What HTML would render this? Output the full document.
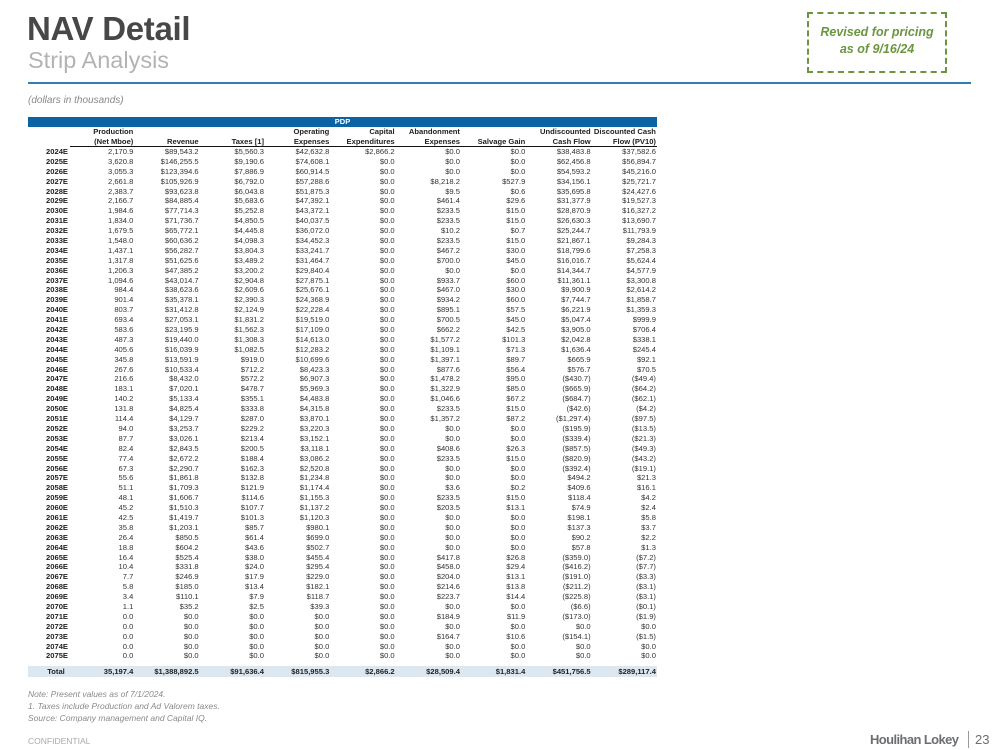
<!DOCTYPE html>
<html><head><meta charset="utf-8"><style>
body{margin:0;width:999px;height:750px;background:#fff;position:relative;overflow:hidden;font-family:"Liberation Sans",Arial,sans-serif;}
.a{position:absolute;white-space:nowrap}
.t1{left:27px;top:10px;font-size:33px;font-weight:bold;color:#474747;letter-spacing:-0.3px}
.t2{left:28px;top:47px;font-size:23.5px;color:#b3b3b3}
.hl{left:28px;top:82px;width:943px;height:1.5px;background:#2f7fb5}
.box{left:807px;top:12px;width:136px;height:57px;border:2.5px dashed #6b9640;color:#6b9640;font-weight:bold;font-style:italic;font-size:12.5px;text-align:center;line-height:17px;padding-top:10px;box-sizing:content-box;height:47px}
.dl{left:28px;top:95px;font-size:10px;font-style:italic;color:#888}
.bar{left:28px;top:117px;width:629px;height:10px;background:#0b63a4;color:#fff;font-size:7.5px;font-weight:bold;text-align:center;line-height:10px}
.tb{position:absolute;left:28px;top:127px;width:629px;font-size:7.6px;color:#333}
.r{display:flex;height:9.9px;line-height:9.9px}
.r span{width:65.33px;text-align:right;flex:none}
.r span:first-child{width:40px;font-weight:bold;color:#222}
.h{font-weight:bold;color:#222;height:9.5px;line-height:9.5px}
.h2{border-bottom:1.3px solid #111;margin-left:42px;height:9.5px}
.h2 span:first-child{width:0 !important}
.tot{margin-top:5px;background:#dde7f0;height:11px;line-height:11px;font-weight:bold;color:#222}
.tot span:first-child{text-align:center;width:56px}
.tot span:nth-child(2){width:49.33px}
.note{left:28px;font-size:8.5px;font-style:italic;color:#8a8a8a}
.conf{left:28px;top:736px;font-size:8.5px;color:#aaa}
.hlk{left:870px;top:732px;font-size:13px;font-weight:bold;color:#6b6e72;letter-spacing:-0.6px}
.sep{left:968px;top:731px;width:1px;height:17px;background:#9a9a9a}
.pg{left:975px;top:732px;font-size:13px;color:#6b6e72}
</style></head><body>
<div class="a t1">NAV Detail</div>
<div class="a t2">Strip Analysis</div>
<div class="a hl"></div>
<div class="a box">Revised for pricing<br>as of 9/16/24</div>
<div class="a dl">(dollars in thousands)</div>
<div class="a bar">PDP</div>
<div class="tb">
<div class="r h"><span></span><span>Production</span><span></span><span></span><span>Operating</span><span>Capital</span><span>Abandonment</span><span></span><span>Undiscounted</span><span>Discounted Cash</span></div>
<div class="r h h2"><span></span><span style="width:63.33px">(Net Mboe)</span><span>Revenue</span><span>Taxes [1]</span><span>Expenses</span><span>Expenditures</span><span>Expenses</span><span>Salvage Gain</span><span>Cash Flow</span><span>Flow (PV10)</span></div>
<div class="r"><span>2024E</span><span>2,170.9</span><span>$89,543.2</span><span>$5,560.3</span><span>$42,632.8</span><span>$2,866.2</span><span>$0.0</span><span>$0.0</span><span>$38,483.8</span><span>$37,582.6</span></div>
<div class="r"><span>2025E</span><span>3,620.8</span><span>$146,255.5</span><span>$9,190.6</span><span>$74,608.1</span><span>$0.0</span><span>$0.0</span><span>$0.0</span><span>$62,456.8</span><span>$56,894.7</span></div>
<div class="r"><span>2026E</span><span>3,055.3</span><span>$123,394.6</span><span>$7,886.9</span><span>$60,914.5</span><span>$0.0</span><span>$0.0</span><span>$0.0</span><span>$54,593.2</span><span>$45,216.0</span></div>
<div class="r"><span>2027E</span><span>2,661.8</span><span>$105,926.9</span><span>$6,792.0</span><span>$57,288.6</span><span>$0.0</span><span>$8,218.2</span><span>$527.9</span><span>$34,156.1</span><span>$25,721.7</span></div>
<div class="r"><span>2028E</span><span>2,383.7</span><span>$93,623.8</span><span>$6,043.8</span><span>$51,875.3</span><span>$0.0</span><span>$9.5</span><span>$0.6</span><span>$35,695.8</span><span>$24,427.6</span></div>
<div class="r"><span>2029E</span><span>2,166.7</span><span>$84,885.4</span><span>$5,683.6</span><span>$47,392.1</span><span>$0.0</span><span>$461.4</span><span>$29.6</span><span>$31,377.9</span><span>$19,527.3</span></div>
<div class="r"><span>2030E</span><span>1,984.6</span><span>$77,714.3</span><span>$5,252.8</span><span>$43,372.1</span><span>$0.0</span><span>$233.5</span><span>$15.0</span><span>$28,870.9</span><span>$16,327.2</span></div>
<div class="r"><span>2031E</span><span>1,834.0</span><span>$71,736.7</span><span>$4,850.5</span><span>$40,037.5</span><span>$0.0</span><span>$233.5</span><span>$15.0</span><span>$26,630.3</span><span>$13,690.7</span></div>
<div class="r"><span>2032E</span><span>1,679.5</span><span>$65,772.1</span><span>$4,445.8</span><span>$36,072.0</span><span>$0.0</span><span>$10.2</span><span>$0.7</span><span>$25,244.7</span><span>$11,793.9</span></div>
<div class="r"><span>2033E</span><span>1,548.0</span><span>$60,636.2</span><span>$4,098.3</span><span>$34,452.3</span><span>$0.0</span><span>$233.5</span><span>$15.0</span><span>$21,867.1</span><span>$9,284.3</span></div>
<div class="r"><span>2034E</span><span>1,437.1</span><span>$56,282.7</span><span>$3,804.3</span><span>$33,241.7</span><span>$0.0</span><span>$467.2</span><span>$30.0</span><span>$18,799.6</span><span>$7,258.3</span></div>
<div class="r"><span>2035E</span><span>1,317.8</span><span>$51,625.6</span><span>$3,489.2</span><span>$31,464.7</span><span>$0.0</span><span>$700.0</span><span>$45.0</span><span>$16,016.7</span><span>$5,624.4</span></div>
<div class="r"><span>2036E</span><span>1,206.3</span><span>$47,385.2</span><span>$3,200.2</span><span>$29,840.4</span><span>$0.0</span><span>$0.0</span><span>$0.0</span><span>$14,344.7</span><span>$4,577.9</span></div>
<div class="r"><span>2037E</span><span>1,094.6</span><span>$43,014.7</span><span>$2,904.8</span><span>$27,875.1</span><span>$0.0</span><span>$933.7</span><span>$60.0</span><span>$11,361.1</span><span>$3,300.8</span></div>
<div class="r"><span>2038E</span><span>984.4</span><span>$38,623.6</span><span>$2,609.6</span><span>$25,676.1</span><span>$0.0</span><span>$467.0</span><span>$30.0</span><span>$9,900.9</span><span>$2,614.2</span></div>
<div class="r"><span>2039E</span><span>901.4</span><span>$35,378.1</span><span>$2,390.3</span><span>$24,368.9</span><span>$0.0</span><span>$934.2</span><span>$60.0</span><span>$7,744.7</span><span>$1,858.7</span></div>
<div class="r"><span>2040E</span><span>803.7</span><span>$31,412.8</span><span>$2,124.9</span><span>$22,228.4</span><span>$0.0</span><span>$895.1</span><span>$57.5</span><span>$6,221.9</span><span>$1,359.3</span></div>
<div class="r"><span>2041E</span><span>693.4</span><span>$27,053.1</span><span>$1,831.2</span><span>$19,519.0</span><span>$0.0</span><span>$700.5</span><span>$45.0</span><span>$5,047.4</span><span>$999.9</span></div>
<div class="r"><span>2042E</span><span>583.6</span><span>$23,195.9</span><span>$1,562.3</span><span>$17,109.0</span><span>$0.0</span><span>$662.2</span><span>$42.5</span><span>$3,905.0</span><span>$706.4</span></div>
<div class="r"><span>2043E</span><span>487.3</span><span>$19,440.0</span><span>$1,308.3</span><span>$14,613.0</span><span>$0.0</span><span>$1,577.2</span><span>$101.3</span><span>$2,042.8</span><span>$338.1</span></div>
<div class="r"><span>2044E</span><span>405.6</span><span>$16,039.9</span><span>$1,082.5</span><span>$12,283.2</span><span>$0.0</span><span>$1,109.1</span><span>$71.3</span><span>$1,636.4</span><span>$245.4</span></div>
<div class="r"><span>2045E</span><span>345.8</span><span>$13,591.9</span><span>$919.0</span><span>$10,699.6</span><span>$0.0</span><span>$1,397.1</span><span>$89.7</span><span>$665.9</span><span>$92.1</span></div>
<div class="r"><span>2046E</span><span>267.6</span><span>$10,533.4</span><span>$712.2</span><span>$8,423.3</span><span>$0.0</span><span>$877.6</span><span>$56.4</span><span>$576.7</span><span>$70.5</span></div>
<div class="r"><span>2047E</span><span>216.6</span><span>$8,432.0</span><span>$572.2</span><span>$6,907.3</span><span>$0.0</span><span>$1,478.2</span><span>$95.0</span><span>($430.7)</span><span>($49.4)</span></div>
<div class="r"><span>2048E</span><span>183.1</span><span>$7,020.1</span><span>$478.7</span><span>$5,969.3</span><span>$0.0</span><span>$1,322.9</span><span>$85.0</span><span>($665.9)</span><span>($64.2)</span></div>
<div class="r"><span>2049E</span><span>140.2</span><span>$5,133.4</span><span>$355.1</span><span>$4,483.8</span><span>$0.0</span><span>$1,046.6</span><span>$67.2</span><span>($684.7)</span><span>($62.1)</span></div>
<div class="r"><span>2050E</span><span>131.8</span><span>$4,825.4</span><span>$333.8</span><span>$4,315.8</span><span>$0.0</span><span>$233.5</span><span>$15.0</span><span>($42.6)</span><span>($4.2)</span></div>
<div class="r"><span>2051E</span><span>114.4</span><span>$4,129.7</span><span>$287.0</span><span>$3,870.1</span><span>$0.0</span><span>$1,357.2</span><span>$87.2</span><span>($1,297.4)</span><span>($97.5)</span></div>
<div class="r"><span>2052E</span><span>94.0</span><span>$3,253.7</span><span>$229.2</span><span>$3,220.3</span><span>$0.0</span><span>$0.0</span><span>$0.0</span><span>($195.9)</span><span>($13.5)</span></div>
<div class="r"><span>2053E</span><span>87.7</span><span>$3,026.1</span><span>$213.4</span><span>$3,152.1</span><span>$0.0</span><span>$0.0</span><span>$0.0</span><span>($339.4)</span><span>($21.3)</span></div>
<div class="r"><span>2054E</span><span>82.4</span><span>$2,843.5</span><span>$200.5</span><span>$3,118.1</span><span>$0.0</span><span>$408.6</span><span>$26.3</span><span>($857.5)</span><span>($49.3)</span></div>
<div class="r"><span>2055E</span><span>77.4</span><span>$2,672.2</span><span>$188.4</span><span>$3,086.2</span><span>$0.0</span><span>$233.5</span><span>$15.0</span><span>($820.9)</span><span>($43.2)</span></div>
<div class="r"><span>2056E</span><span>67.3</span><span>$2,290.7</span><span>$162.3</span><span>$2,520.8</span><span>$0.0</span><span>$0.0</span><span>$0.0</span><span>($392.4)</span><span>($19.1)</span></div>
<div class="r"><span>2057E</span><span>55.6</span><span>$1,861.8</span><span>$132.8</span><span>$1,234.8</span><span>$0.0</span><span>$0.0</span><span>$0.0</span><span>$494.2</span><span>$21.3</span></div>
<div class="r"><span>2058E</span><span>51.1</span><span>$1,709.3</span><span>$121.9</span><span>$1,174.4</span><span>$0.0</span><span>$3.6</span><span>$0.2</span><span>$409.6</span><span>$16.1</span></div>
<div class="r"><span>2059E</span><span>48.1</span><span>$1,606.7</span><span>$114.6</span><span>$1,155.3</span><span>$0.0</span><span>$233.5</span><span>$15.0</span><span>$118.4</span><span>$4.2</span></div>
<div class="r"><span>2060E</span><span>45.2</span><span>$1,510.3</span><span>$107.7</span><span>$1,137.2</span><span>$0.0</span><span>$203.5</span><span>$13.1</span><span>$74.9</span><span>$2.4</span></div>
<div class="r"><span>2061E</span><span>42.5</span><span>$1,419.7</span><span>$101.3</span><span>$1,120.3</span><span>$0.0</span><span>$0.0</span><span>$0.0</span><span>$198.1</span><span>$5.8</span></div>
<div class="r"><span>2062E</span><span>35.8</span><span>$1,203.1</span><span>$85.7</span><span>$980.1</span><span>$0.0</span><span>$0.0</span><span>$0.0</span><span>$137.3</span><span>$3.7</span></div>
<div class="r"><span>2063E</span><span>26.4</span><span>$850.5</span><span>$61.4</span><span>$699.0</span><span>$0.0</span><span>$0.0</span><span>$0.0</span><span>$90.2</span><span>$2.2</span></div>
<div class="r"><span>2064E</span><span>18.8</span><span>$604.2</span><span>$43.6</span><span>$502.7</span><span>$0.0</span><span>$0.0</span><span>$0.0</span><span>$57.8</span><span>$1.3</span></div>
<div class="r"><span>2065E</span><span>16.4</span><span>$525.4</span><span>$38.0</span><span>$455.4</span><span>$0.0</span><span>$417.8</span><span>$26.8</span><span>($359.0)</span><span>($7.2)</span></div>
<div class="r"><span>2066E</span><span>10.4</span><span>$331.8</span><span>$24.0</span><span>$295.4</span><span>$0.0</span><span>$458.0</span><span>$29.4</span><span>($416.2)</span><span>($7.7)</span></div>
<div class="r"><span>2067E</span><span>7.7</span><span>$246.9</span><span>$17.9</span><span>$229.0</span><span>$0.0</span><span>$204.0</span><span>$13.1</span><span>($191.0)</span><span>($3.3)</span></div>
<div class="r"><span>2068E</span><span>5.8</span><span>$185.0</span><span>$13.4</span><span>$182.1</span><span>$0.0</span><span>$214.6</span><span>$13.8</span><span>($211.2)</span><span>($3.1)</span></div>
<div class="r"><span>2069E</span><span>3.4</span><span>$110.1</span><span>$7.9</span><span>$118.7</span><span>$0.0</span><span>$223.7</span><span>$14.4</span><span>($225.8)</span><span>($3.1)</span></div>
<div class="r"><span>2070E</span><span>1.1</span><span>$35.2</span><span>$2.5</span><span>$39.3</span><span>$0.0</span><span>$0.0</span><span>$0.0</span><span>($6.6)</span><span>($0.1)</span></div>
<div class="r"><span>2071E</span><span>0.0</span><span>$0.0</span><span>$0.0</span><span>$0.0</span><span>$0.0</span><span>$184.9</span><span>$11.9</span><span>($173.0)</span><span>($1.9)</span></div>
<div class="r"><span>2072E</span><span>0.0</span><span>$0.0</span><span>$0.0</span><span>$0.0</span><span>$0.0</span><span>$0.0</span><span>$0.0</span><span>$0.0</span><span>$0.0</span></div>
<div class="r"><span>2073E</span><span>0.0</span><span>$0.0</span><span>$0.0</span><span>$0.0</span><span>$0.0</span><span>$164.7</span><span>$10.6</span><span>($154.1)</span><span>($1.5)</span></div>
<div class="r"><span>2074E</span><span>0.0</span><span>$0.0</span><span>$0.0</span><span>$0.0</span><span>$0.0</span><span>$0.0</span><span>$0.0</span><span>$0.0</span><span>$0.0</span></div>
<div class="r"><span>2075E</span><span>0.0</span><span>$0.0</span><span>$0.0</span><span>$0.0</span><span>$0.0</span><span>$0.0</span><span>$0.0</span><span>$0.0</span><span>$0.0</span></div>
<div class="r tot"><span>Total</span><span>35,197.4</span><span>$1,388,892.5</span><span>$91,636.4</span><span>$815,955.3</span><span>$2,866.2</span><span>$28,509.4</span><span>$1,831.4</span><span>$451,756.5</span><span>$289,117.4</span></div>
</div>
<div class="a note" style="top:689px">Note: Present values as of 7/1/2024.</div>
<div class="a note" style="top:701px">1. Taxes include Production and Ad Valorem taxes.</div>
<div class="a note" style="top:713px">Source: Company management and Capital IQ.</div>
<div class="a conf">CONFIDENTIAL</div>
<div class="a hlk">Houlihan Lokey</div>
<div class="a sep"></div>
<div class="a pg">23</div>
</body></html>
